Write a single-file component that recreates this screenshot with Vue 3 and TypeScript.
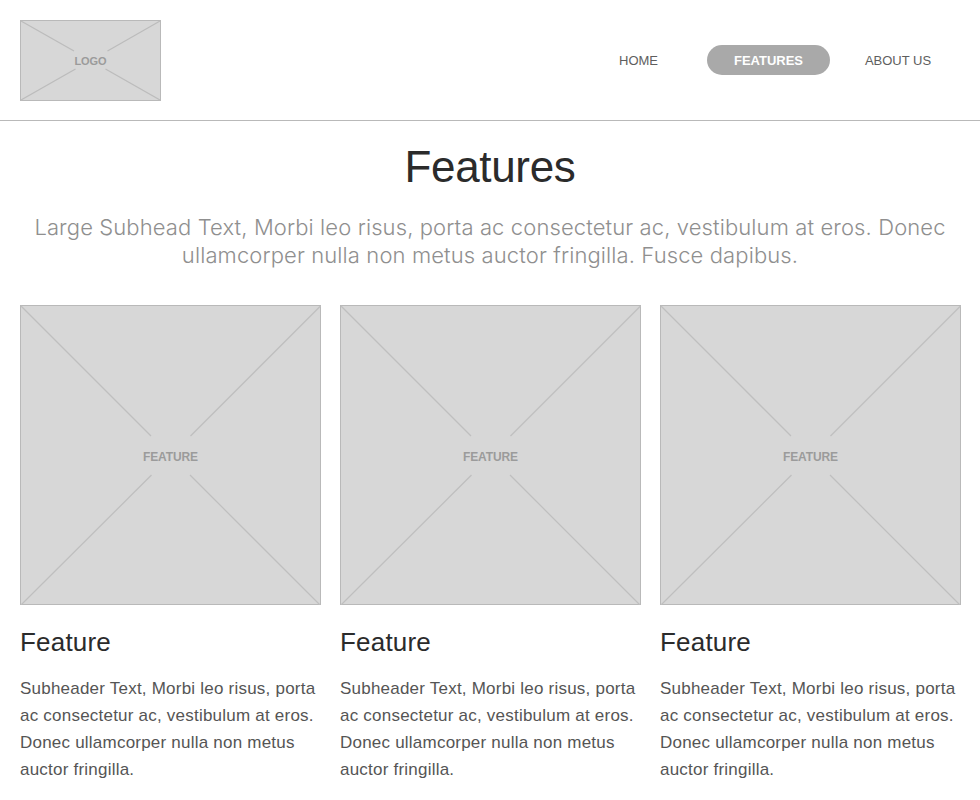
<script setup lang="ts">
interface Feature {
  id: number
  title: string
  lines: string[]
}

const nav = [
  { label: 'HOME', active: false, name: 'home' },
  { label: 'FEATURES', active: true, name: 'features' },
  { label: 'ABOUT US', active: false, name: 'about' },
]

const subhead = [
  'Large Subhead Text, Morbi leo risus, porta ac consectetur ac, vestibulum at eros. Donec',
  'ullamcorper nulla non metus auctor fringilla. Fusce dapibus.',
]

const features: Feature[] = [1, 2, 3].map((id) => ({
  id,
  title: 'Feature',
  lines: [
    'Subheader Text, Morbi leo risus, porta',
    'ac consectetur ac, vestibulum at eros.',
    'Donec ullamcorper nulla non metus',
    'auctor fringilla.',
  ],
}))
</script>

<template>
  <div class="page">
    <header class="header">
      <div class="placeholder logo">
        <svg class="cross" viewBox="0 0 141 81" aria-hidden="true">
          <path d="M1 1L54 31M140 1L87.5 31M1 80L55.5 49M140 80L85.5 49" />
        </svg>
        <span class="label">LOGO</span>
      </div>
      <nav class="nav">
        <a v-for="item in nav" :key="item.name" class="link" :class="[item.name, { active: item.active }]">
          <span>{{ item.label }}</span>
        </a>
      </nav>
    </header>
    <main class="main">
      <h1 class="title">Features</h1>
      <p class="subhead">
        <span v-for="(line, i) in subhead" :key="i" class="line"><span>{{ line }}</span></span>
      </p>
      <section class="grid">
        <article v-for="f in features" :key="f.id">
          <div class="placeholder picture">
            <svg class="cross" viewBox="0 0 301 300" aria-hidden="true">
              <path d="M1 1L131 131M300.5 1L170.5 131M1 300L131.5 170M300 300L170 170" />
            </svg>
            <span class="label">FEATURE</span>
          </div>
          <h2 class="name">{{ f.title }}</h2>
          <p class="text">
            <span v-for="(line, i) in f.lines" :key="i" class="line"><span>{{ line }}</span></span>
          </p>
        </article>
      </section>
    </main>
  </div>
</template>

<style>
body {
  background: #fff;
}
</style>

<style scoped>
.page {
  width: 980px;
  height: 800px;
  overflow: hidden;
  font-family: 'Liberation Sans', Arial, sans-serif;
}
.header {
  display: flex;
  justify-content: space-between;
  align-items: center;
  box-sizing: border-box;
  height: 121px;
  padding: 0 20px;
  border-bottom: 1px solid #b9b9b9;
}
.placeholder {
  display: grid;
  place-items: center;
  box-sizing: border-box;
  background: #d7d7d7;
  color: #9b9b9b;
  font-weight: 700;
}
.placeholder > * {
  grid-area: 1 / 1;
}
.logo {
  width: 141px;
  height: 81px;
  box-shadow: inset 0 0 0 1px #b9b9b9;
  font-size: 11px;
  letter-spacing: -0.1px;
}
.logo .label {
  padding-top: 2px;
}
.cross {
  width: 100%;
  height: 100%;
  fill: none;
  stroke: #bcbcbc;
  stroke-width: 1.3;
}
.nav {
  display: flex;
  align-items: center;
  margin-right: 29px;
}
.link {
  display: flex;
  box-sizing: border-box;
  justify-content: center;
  height: 30px;
  padding-top: 1px;
  font-size: 13px;
  line-height: 30px;
  color: #5e5e5e;
  white-space: nowrap;
}
.link.home {
  width: 39px;
}
.link.features {
  width: 123px;
  margin: 0 35px 0 49px;
  border-radius: 15px;
}
.link.about {
  width: 66px;
}
.link.active {
  background: #a9a9a9;
  color: #fff;
  font-weight: 700;
}
.main {
  padding: 0 20px;
}
.title {
  margin: 20px 0 0;
  text-align: center;
  font-size: 44px;
  line-height: 52px;
  letter-spacing: -0.35px;
  font-weight: 400;
  color: #2b2b2b;
}
.subhead {
  margin: 20px 0 0;
  text-align: center;
  font-family: Inter, 'Liberation Sans', sans-serif;
  font-size: 22px;
  line-height: 28px;
  letter-spacing: 0.11px;
  font-weight: 300;
  color: #8f8f8f;
}
.line {
  display: block;
  white-space: nowrap;
}
.grid {
  display: grid;
  grid-template-columns: repeat(3, 301px);
  gap: 19px;
  margin-top: 36px;
}
.picture {
  width: 301px;
  height: 300px;
  box-shadow: inset 0 0 0 1px #b9b9b9;
  font-size: 12px;
  letter-spacing: -0.1px;
}
.picture .label {
  padding-top: 3px;
}
.picture .cross {
  stroke: #bfbfbf;
}
.name {
  margin: 21px 0 0;
  font-size: 26px;
  line-height: 32px;
  letter-spacing: 0.2px;
  font-weight: 400;
  color: #2b2b2b;
}
.text {
  margin: 17px 0 0;
  font-size: 17px;
  line-height: 27px;
  letter-spacing: 0.22px;
  color: #555;
}
</style>
